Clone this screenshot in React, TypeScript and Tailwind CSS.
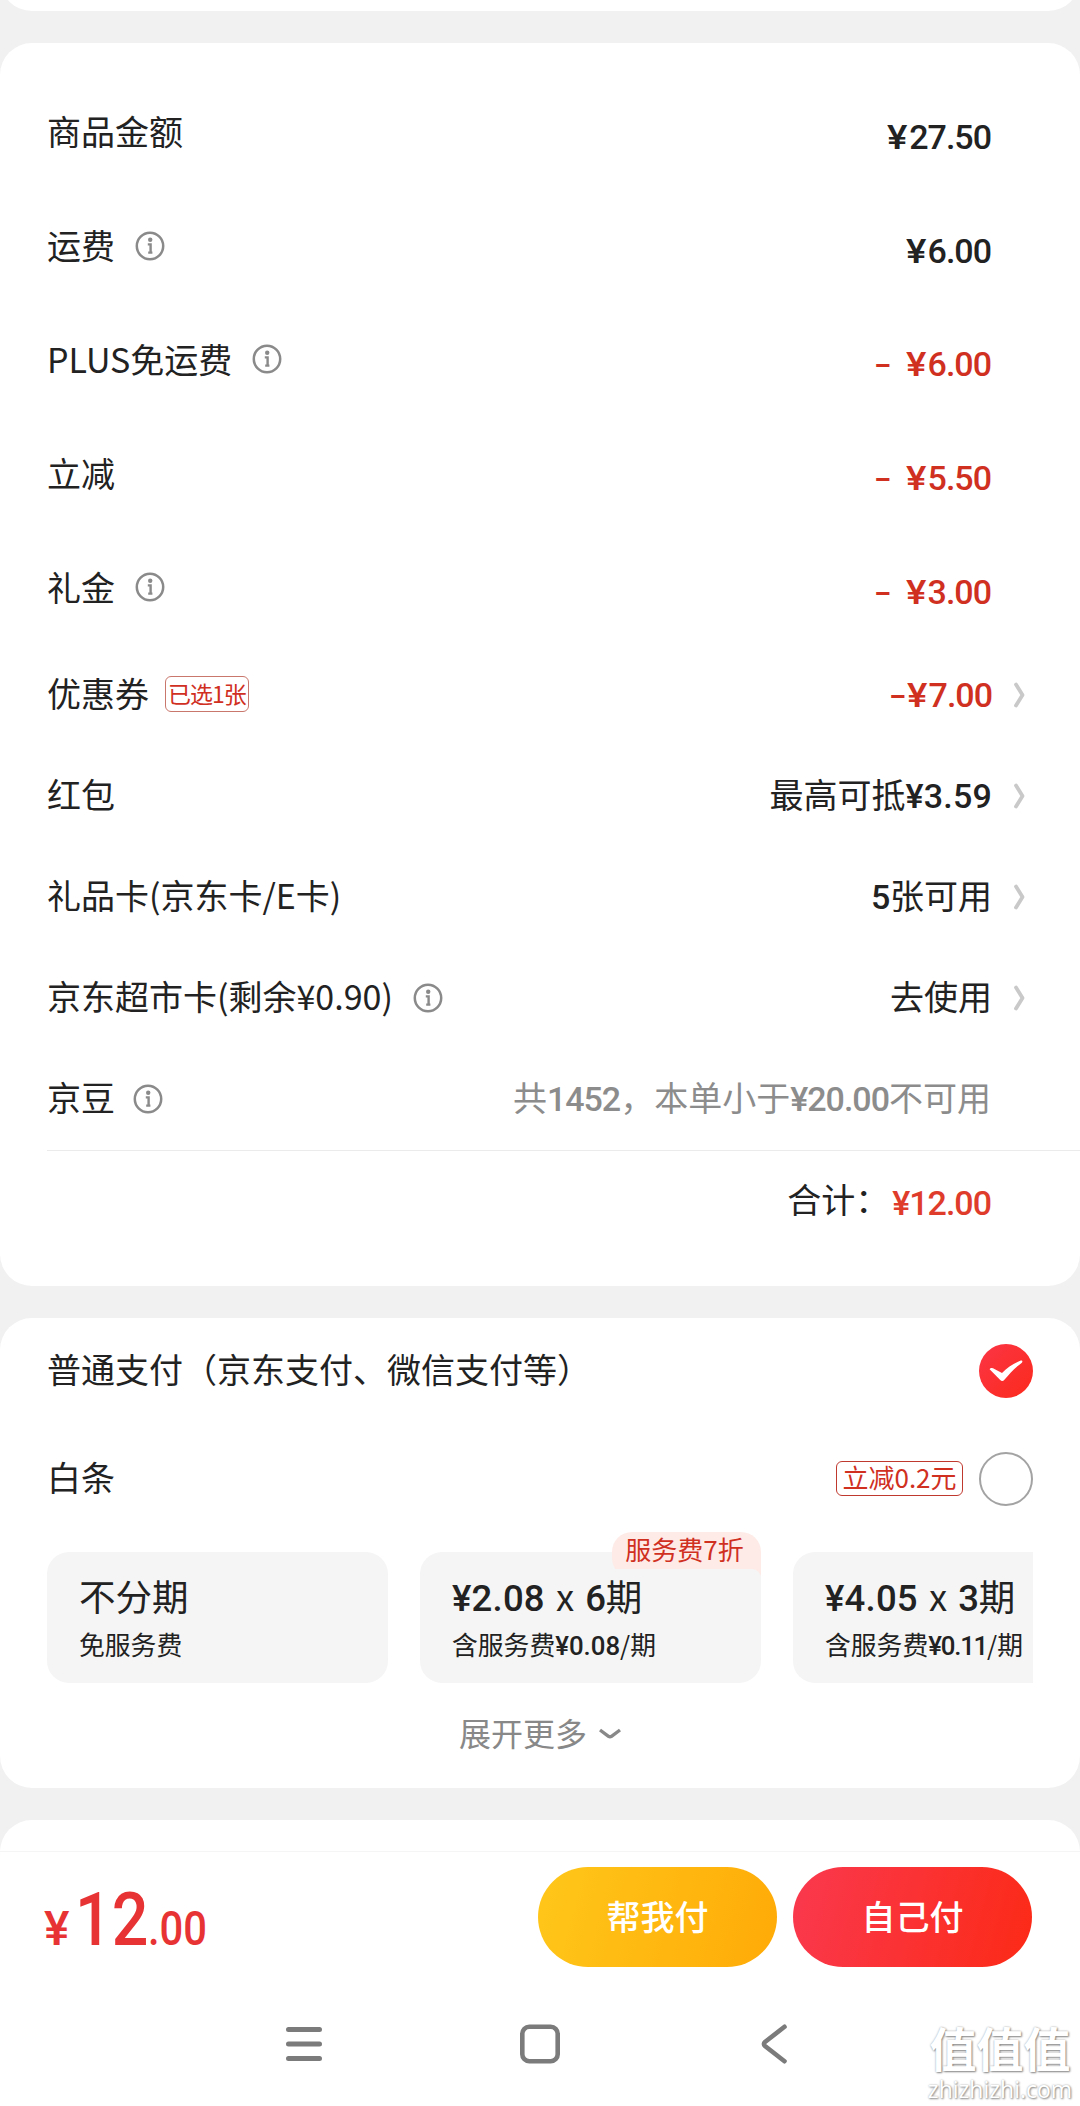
import React from 'react';

const RED = 'text-[#d0301f]';

const InfoIcon: React.FC<{ className?: string }> = ({ className = 'ml-5' }) => (
  <svg className={`h-[30px] w-[30px] shrink-0 text-[#8a8a8a] ${className}`} viewBox="0 0 30 30" fill="none" stroke="currentColor">
    <circle cx="15" cy="15" r="13.2" strokeWidth="2.5" />
    <circle cx="15.2" cy="8.8" r="2.2" fill="currentColor" stroke="none" />
    <path d="M12.8 13.400h2.800v8.200M13.200 21.600h4.200" strokeWidth="2.4" />
  </svg>
);

const ChevronRight = () => (
  <svg className="ml-5 h-[30px] w-[15px] shrink-0" viewBox="0 0 15 30" fill="none" stroke="#c9c9c9" strokeWidth="3.800" strokeLinecap="round" strokeLinejoin="round">
    <path d="M4 4.500 10.500 15 4 25.500" />
  </svg>
);

// digits and the currency sign are set in a narrower, heavier face than the Chinese text
const Num: React.FC<{ children: React.ReactNode; className?: string }> = ({ children, className = 'tracking-[-0.3px]' }) => (
  <span className={`font-[Roboto,'Noto_Sans_CJK_SC',sans-serif] leading-none font-medium ${className}`}>{children}</span>
);

const Amount: React.FC<{ value: string }> = ({ value }) => (
  <Num className="tracking-[-1px]">
    <span className="mr-[5px] inline-block origin-left scale-x-[1.13]">¥</span>
    {value}
  </Num>
);

const Minus = () => <Num className="inline-block origin-right scale-x-150">-</Num>;

const fees = [
  { label: '商品金额', amount: '27.50' },
  { label: '运费', amount: '6.00', info: true },
  { label: 'PLUS免运费', amount: '6.00', info: true, minus: true },
  { label: '立减', amount: '5.50', minus: true },
  { label: '礼金', amount: '3.00', info: true, minus: true },
];

const plans = [
  { title: <>不分期</>, fee: <>免服务费</> },
  {
    title: <><Num className="tracking-[0.2px]">¥2.08</Num> x <Num>6</Num>期</>,
    fee: <>含服务费<Num className="tracking-normal">¥0.08</Num>/期</>,
    tag: '服务费7折',
  },
  {
    title: <><Num className="tracking-[0.2px]">¥4.05</Num> x <Num>3</Num>期</>,
    fee: <>含服务费<Num className="tracking-[-1.2px]">¥0.11</Num>/期</>,
  },
];

const AssetRow: React.FC<{ label: React.ReactNode; icon?: React.ReactNode; children: React.ReactNode }> = ({ label, icon, children }) => (
  <div className="flex h-[101px] items-center justify-between">
    <div className="flex items-center">
      <span className="pb-1">{label}</span>
      {icon}
    </div>
    <div className="flex items-center">{children}</div>
  </div>
);

const FeeCard = () => (
  <section className="h-[1243px] rounded-[32px] bg-white pt-8 pl-[47px]">
    <div className="grid h-[569px] grid-rows-5 pr-[89px]">
      {fees.map((fee) => (
        <div key={fee.label} className="flex items-center justify-between">
          <div className="flex items-center">
            <span className="pb-px">{fee.label}</span>
            {fee.info && <InfoIcon />}
          </div>
          <div className={`flex items-center gap-3.5 pt-[10px] ${fee.minus ? RED : ''}`}>
            {fee.minus && <Minus />}
            <Amount value={fee.amount} />
          </div>
        </div>
      ))}
    </div>

    <div className="pr-[53px]">
      <AssetRow
        label="优惠券"
        icon={
          <span className="mb-px ml-4 flex h-9 w-[84px] items-center justify-center rounded-md border border-[#c9776c] pb-[3px] text-[23px] tracking-[-1px] text-[#d0301f]">
            已选1张
          </span>
        }
      >
        <div className={`flex items-center ${RED}`}>
          <Minus />
          <Amount value="7.00" />
        </div>
        <ChevronRight />
      </AssetRow>
      <AssetRow label="红包">
        <span className="pb-[3px]">最高可抵<Num className="tracking-[0.2px]">¥3.59</Num></span>
        <ChevronRight />
      </AssetRow>
      <AssetRow label="礼品卡(京东卡/E卡)">
        <span className="pb-[3px]"><Num>5</Num>张可用</span>
        <ChevronRight />
      </AssetRow>
      <AssetRow label="京东超市卡(剩余¥0.90)" icon={<InfoIcon />}>
        <span className="pb-[3px]">去使用</span>
        <ChevronRight />
      </AssetRow>
      <AssetRow label="京豆" icon={<InfoIcon className="ml-[18px]" />}>
        <span className="mr-9 pb-[3px] text-[#8c8c8c]">
          共<Num className="tracking-[-1px]">1452</Num>，本单小于<Num className="tracking-[-1px]">¥20.00</Num>不可用
        </span>
      </AssetRow>
    </div>

    <div className="mt-px flex h-[100px] items-center justify-end border-t border-[#ebebeb] pr-[89px]">
      <span className="pb-1">合计：</span>
      <Num className="ml-[3px] pt-[5px] tracking-[-1px] text-[#e03c2c]">¥12.00</Num>
    </div>
  </section>
);

const PayCard = () => (
  <section className="h-[470px] rounded-[32px] bg-white px-[47px]">
    <div className="flex h-[105px] items-center justify-between">
      <span className="pb-1">普通支付（京东支付、微信支付等）</span>
      <svg className="h-[54px] w-[54px]" viewBox="0 0 54 54">
        <defs>
          <linearGradient id="checked" x1="0" y1="0" x2="1" y2="1">
            <stop offset="0" stopColor="#fb3545" />
            <stop offset="1" stopColor="#fc2a1c" />
          </linearGradient>
        </defs>
        <circle cx="27" cy="27" r="27" fill="url(#checked)" />
        <path d="M10.600 25.300c.8-1.800 3-1.700 4.800-.4l7.600 4c5.500-5.500 11-9 18.200-12.200 2-.8 3 .8 1.400 2.200C36 23.500 30.500 29.500 25.400 35.800c-1.400 1.700-3 1.600-4.400-.1z" fill="#fff" />
      </svg>
    </div>

    <div className="flex h-[111px] items-center">
      <span className="flex-1 pb-1">白条</span>
      <span className="flex h-[35px] w-[127px] items-center justify-center rounded-md border-[1.5px] border-[#c0392f] pb-[3px] text-[26px] text-[#d0301f]">
        立减0.2元
      </span>
      <span className="ml-4 h-[54px] w-[54px] rounded-full border-2 border-[#a3a3a3]" />
    </div>

    <div className="-mt-[4px] flex gap-8 overflow-hidden pt-[22px]">
      {plans.map((plan, i) => (
        <div key={i} className="relative flex h-[131px] w-[341px] shrink-0 flex-col rounded-[22px] bg-[#f5f5f5] pt-[22px] pl-8">
          <div className="h-[44px] text-[36.5px] leading-[44px] [word-spacing:3px]">{plan.title}</div>
          <div className="mt-2 h-[36px] text-[25.800px] leading-[36px]">{plan.fee}</div>
          {plan.tag && (
            <div className="absolute -top-5 right-0 h-[46px] w-[149px] rounded-t-[20px] rounded-bl-[20px] bg-[#feebe8]">
              <div className="flex h-[37px] items-center justify-center pr-1 pb-[3px] text-[26px] text-[#d0301f]">{plan.tag}</div>
              <div className="h-[9px] rounded-tr-[20px] bg-[#f5f5f5]" />
            </div>
          )}
        </div>
      ))}
    </div>

    <div className="flex h-[103px] items-center justify-center text-[32px] text-[#888]">
      <span className="pb-1.5">展开更多</span>
      <svg className="mb-0.5 ml-3 h-3 w-[22px]" viewBox="0 0 22 12" fill="none" stroke="currentColor" strokeWidth="3.400">
        <path d="M1 2l8.500 6.300q1.500 1 3 0L21 2" />
      </svg>
    </div>
  </section>
);

const NavBar = () => (
  <nav className="flex h-[124px] items-center pl-[286px] text-[#7b7b7b]">
    <svg className="h-10 w-9" viewBox="0 0 36 40" stroke="currentColor" strokeWidth="5" strokeLinecap="round">
      <path d="M2.500 5.500h31M2.500 20h31M2.500 34.500h31" />
    </svg>
    <svg className="ml-[197px] h-10 w-[42px]" viewBox="0 0 42 40" fill="none" stroke="currentColor" strokeWidth="4.600">
      <rect x="3.300" y="2.800" width="35.400" height="34.400" rx="7" />
    </svg>
    <svg className="ml-[199px] h-10 w-7" viewBox="0 0 28 40" fill="none" stroke="currentColor" strokeWidth="4.600" strokeLinecap="round">
      <path d="M24.500 2.800 5 18q-2.200 2 0 4L24.500 37.200" />
    </svg>
  </nav>
);

export default function App() {
  return (
    <div className="relative flex h-[2106px] w-[1080px] flex-col overflow-hidden bg-[#f1f1f1] font-['Noto_Sans_CJK_SC',sans-serif] text-[34px] leading-[50px] whitespace-nowrap text-[#222]">
      <div className="h-[11px] overflow-hidden">
        <div className="-mt-[53px] h-16 rounded-[32px] bg-white" />
      </div>
      <main className="mt-8 flex flex-col gap-8">
        <FeeCard />
        <PayCard />
        <div className="h-[31px] overflow-hidden">
          <div className="h-16 rounded-[32px] bg-white" />
        </div>
      </main>

      <footer className="flex-1 border-t border-[#f5f5f5] bg-white">
        <div className="flex h-[130px] items-center pr-12 pl-11">
          <div className="flex flex-1 items-baseline pt-1 text-[#e83334]">
            <Num className="w-[31px] text-[48px]">¥</Num>
            <Num className="w-[73px] origin-left scale-x-[0.86] text-[75px] font-bold">12</Num>
            <Num className="origin-left scale-x-[0.87] text-[48px]">.00</Num>
          </div>
          <button className="h-[100px] w-[239px] rounded-full bg-linear-[105deg,#ffc71a,#ffaa07] pb-[3px] font-medium text-white">帮我付</button>
          <button className="ml-4 h-[100px] w-[239px] rounded-full bg-linear-[105deg,#fa394f,#fc2a16] pb-[3px] font-medium text-white">自己付</button>
        </div>
        <NavBar />
      </footer>

      <div className="absolute right-[9px] bottom-1 flex w-[142px] flex-col items-center text-white [text-shadow:1px_1px_2px_#888,0_0_2px_#aaa]">
        <span className="text-[47px] leading-[58px] font-bold">值值值</span>
        <span className="font-['Open_Sans',sans-serif] text-[23px] leading-[26px] font-medium">zhizhizhi.com</span>
      </div>
    </div>
  );
}
